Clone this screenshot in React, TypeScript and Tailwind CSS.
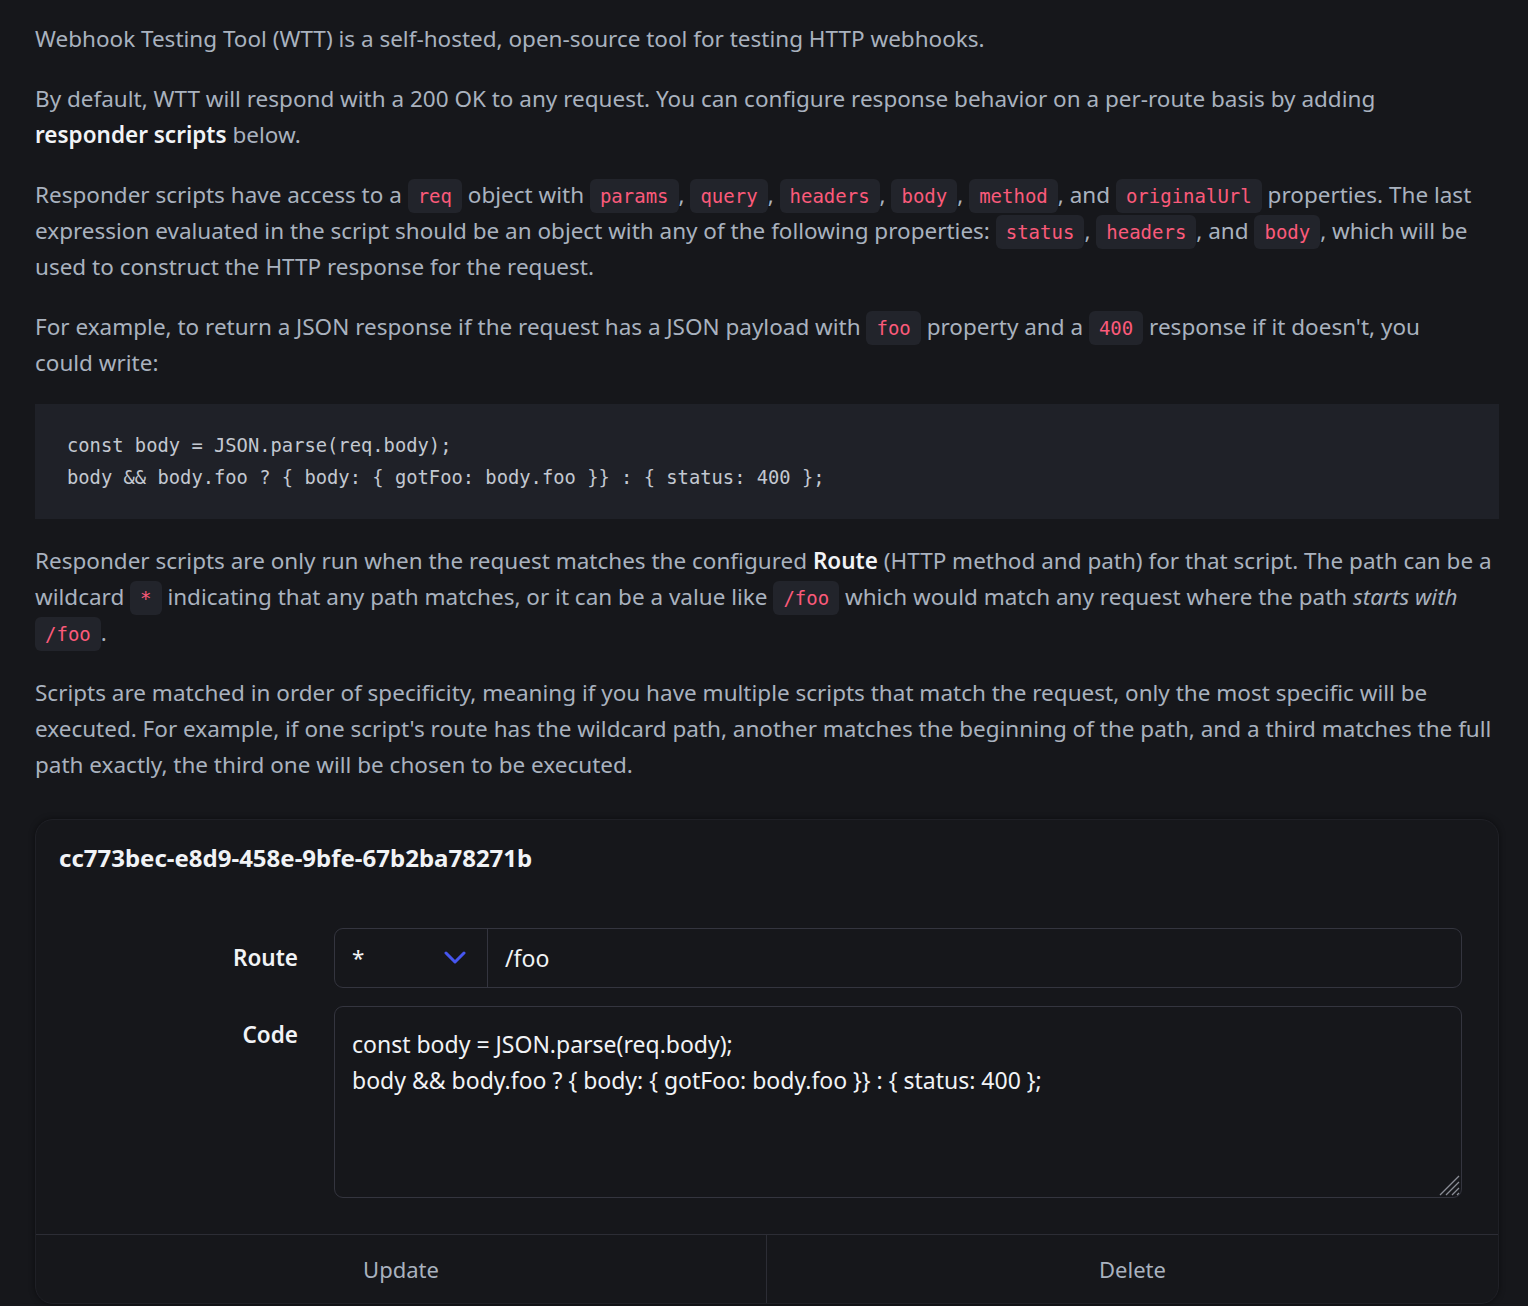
import React from "react";

const Code = ({ children }: { children: React.ReactNode }) => (
  <code className="rounded-[6px] bg-[#22242b] px-[10px] py-[6px] font-['DejaVu_Sans_Mono',monospace] text-[19px] leading-none text-[#fb5a7a]">
    {children}
  </code>
);

const script = "const body = JSON.parse(req.body);\nbody && body.foo ? { body: { gotFoo: body.foo }} : { status: 400 };";

export default function App() {
  return (
    <div className="min-h-[1306px] bg-[#16171b] pl-[35px] pr-[29px] pt-[21px] font-['Noto_Sans',sans-serif] text-[22.5px] leading-[36px] text-[#a9b2bf]">
      <p className="mb-[24px]">
        Webhook Testing Tool (WTT) is a self-hosted, open-source tool for testing HTTP webhooks.
      </p>
      <p className="mb-[24px]">
        By default, WTT will respond with a 200 OK to any request. You can configure response behavior on a per-route basis by adding
        <br />
        <strong className="font-semibold text-[#f1f3f6]">responder scripts</strong> below.
      </p>
      <p className="mb-[24px]">
        Responder scripts have access to a <Code>req</Code> object with <Code>params</Code>, <Code>query</Code>,{" "}
        <Code>headers</Code>, <Code>body</Code>, <Code>method</Code>, and <Code>originalUrl</Code> properties. The last
        expression evaluated in the script should be an object with any of the following properties: <Code>status</Code>,{" "}
        <Code>headers</Code>, and <Code>body</Code>, which will be used to construct the HTTP response for the request.
      </p>
      <p className="mb-[23px]">
        For example, to return a JSON response if the request has a JSON payload with <Code>foo</Code> property and a{" "}
        <Code>400</Code> response if it doesn't, you
        <br />
        could write:
      </p>

      <pre className="mb-[24px] bg-[#1f2128] px-[32px] pb-[25px] pt-[26px] font-['DejaVu_Sans_Mono',monospace] text-[18.8px] leading-[32px] text-[#c3c8d1]">
        {script}
      </pre>

      <p className="mb-[24px]">
        Responder scripts are only run when the request matches the configured{" "}
        <strong className="font-semibold text-[#f1f3f6]">Route</strong> (HTTP method and path) for that script. The path can be a
        wildcard <Code>*</Code> indicating that any path matches, or it can be a value like <Code>/foo</Code> which would match
        any request where the path <em>starts with</em> <Code>/foo</Code>.
      </p>
      <p className="mb-[36px]">
        Scripts are matched in order of specificity, meaning if you have multiple scripts that match the request, only the most
        specific will be executed. For example, if one script's route has the wildcard path, another matches the beginning of the
        path, and a third matches the full path exactly, the third one will be chosen to be executed.
      </p>

      {/* Responder script card */}
      <div className="overflow-hidden rounded-[18px] border border-[#1f2026] bg-[#16171b] shadow-[0_0_6px_rgba(0,0,0,0.45)]">
        <div className="px-[23px] pb-[52px] pt-[20px]">
          <h2 className="text-[24px] font-bold leading-[36px] text-[#f1f3f6]">cc773bec-e8d9-458e-9bfe-67b2ba78271b</h2>
        </div>

        <div className="grid grid-cols-[262px_1fr] gap-x-[36px] gap-y-[18px] pb-[36px] pr-[36px]">
          <label className="self-center text-right font-semibold text-[#f1f3f6]">Route</label>
          <div className="flex h-[60px] rounded-[9px] border border-[#34353f]">
            <div className="flex w-[153px] items-center justify-between border-r border-[#34353f] pl-[17px] pr-[21px] text-[#f1f3f6]">
              <span>*</span>
              <svg width="22" height="14" viewBox="0 0 22 14" fill="none">
                <path d="M2 2l9 9 9-9" stroke="#4656f0" strokeWidth="3" strokeLinecap="round" strokeLinejoin="round" />
              </svg>
            </div>
            <div className="flex flex-1 items-center pl-[17px] text-[23px] text-[#f1f3f6]">/foo</div>
          </div>

          <label className="pt-[11px] text-right font-semibold text-[#f1f3f6]">Code</label>
          <div className="relative">
            <textarea
              readOnly
              defaultValue={script}
              className="block h-[192px] w-full resize-none rounded-[9px] border border-[#34353f] bg-transparent px-[17px] pt-[19px] text-[23px] leading-[36px] text-[#f1f3f6] outline-none"
            />
            {/* resize grip */}
            <svg className="absolute bottom-[2px] right-[2px]" width="22" height="22" viewBox="0 0 22 22">
              <path d="M21 2L2 21M21 8L8 21M21 14L14 21M21 19L19 21" stroke="#8a8d96" strokeWidth="1.3" />
            </svg>
          </div>
        </div>

        <div className="grid grid-cols-2 border-t border-[#2c2d35]">
          <button className="h-[68px] border-r border-[#2c2d35] text-[22px] text-[#a9b2bf]">Update</button>
          <button className="h-[68px] text-[22px] text-[#a9b2bf]">Delete</button>
        </div>
      </div>
    </div>
  );
}
